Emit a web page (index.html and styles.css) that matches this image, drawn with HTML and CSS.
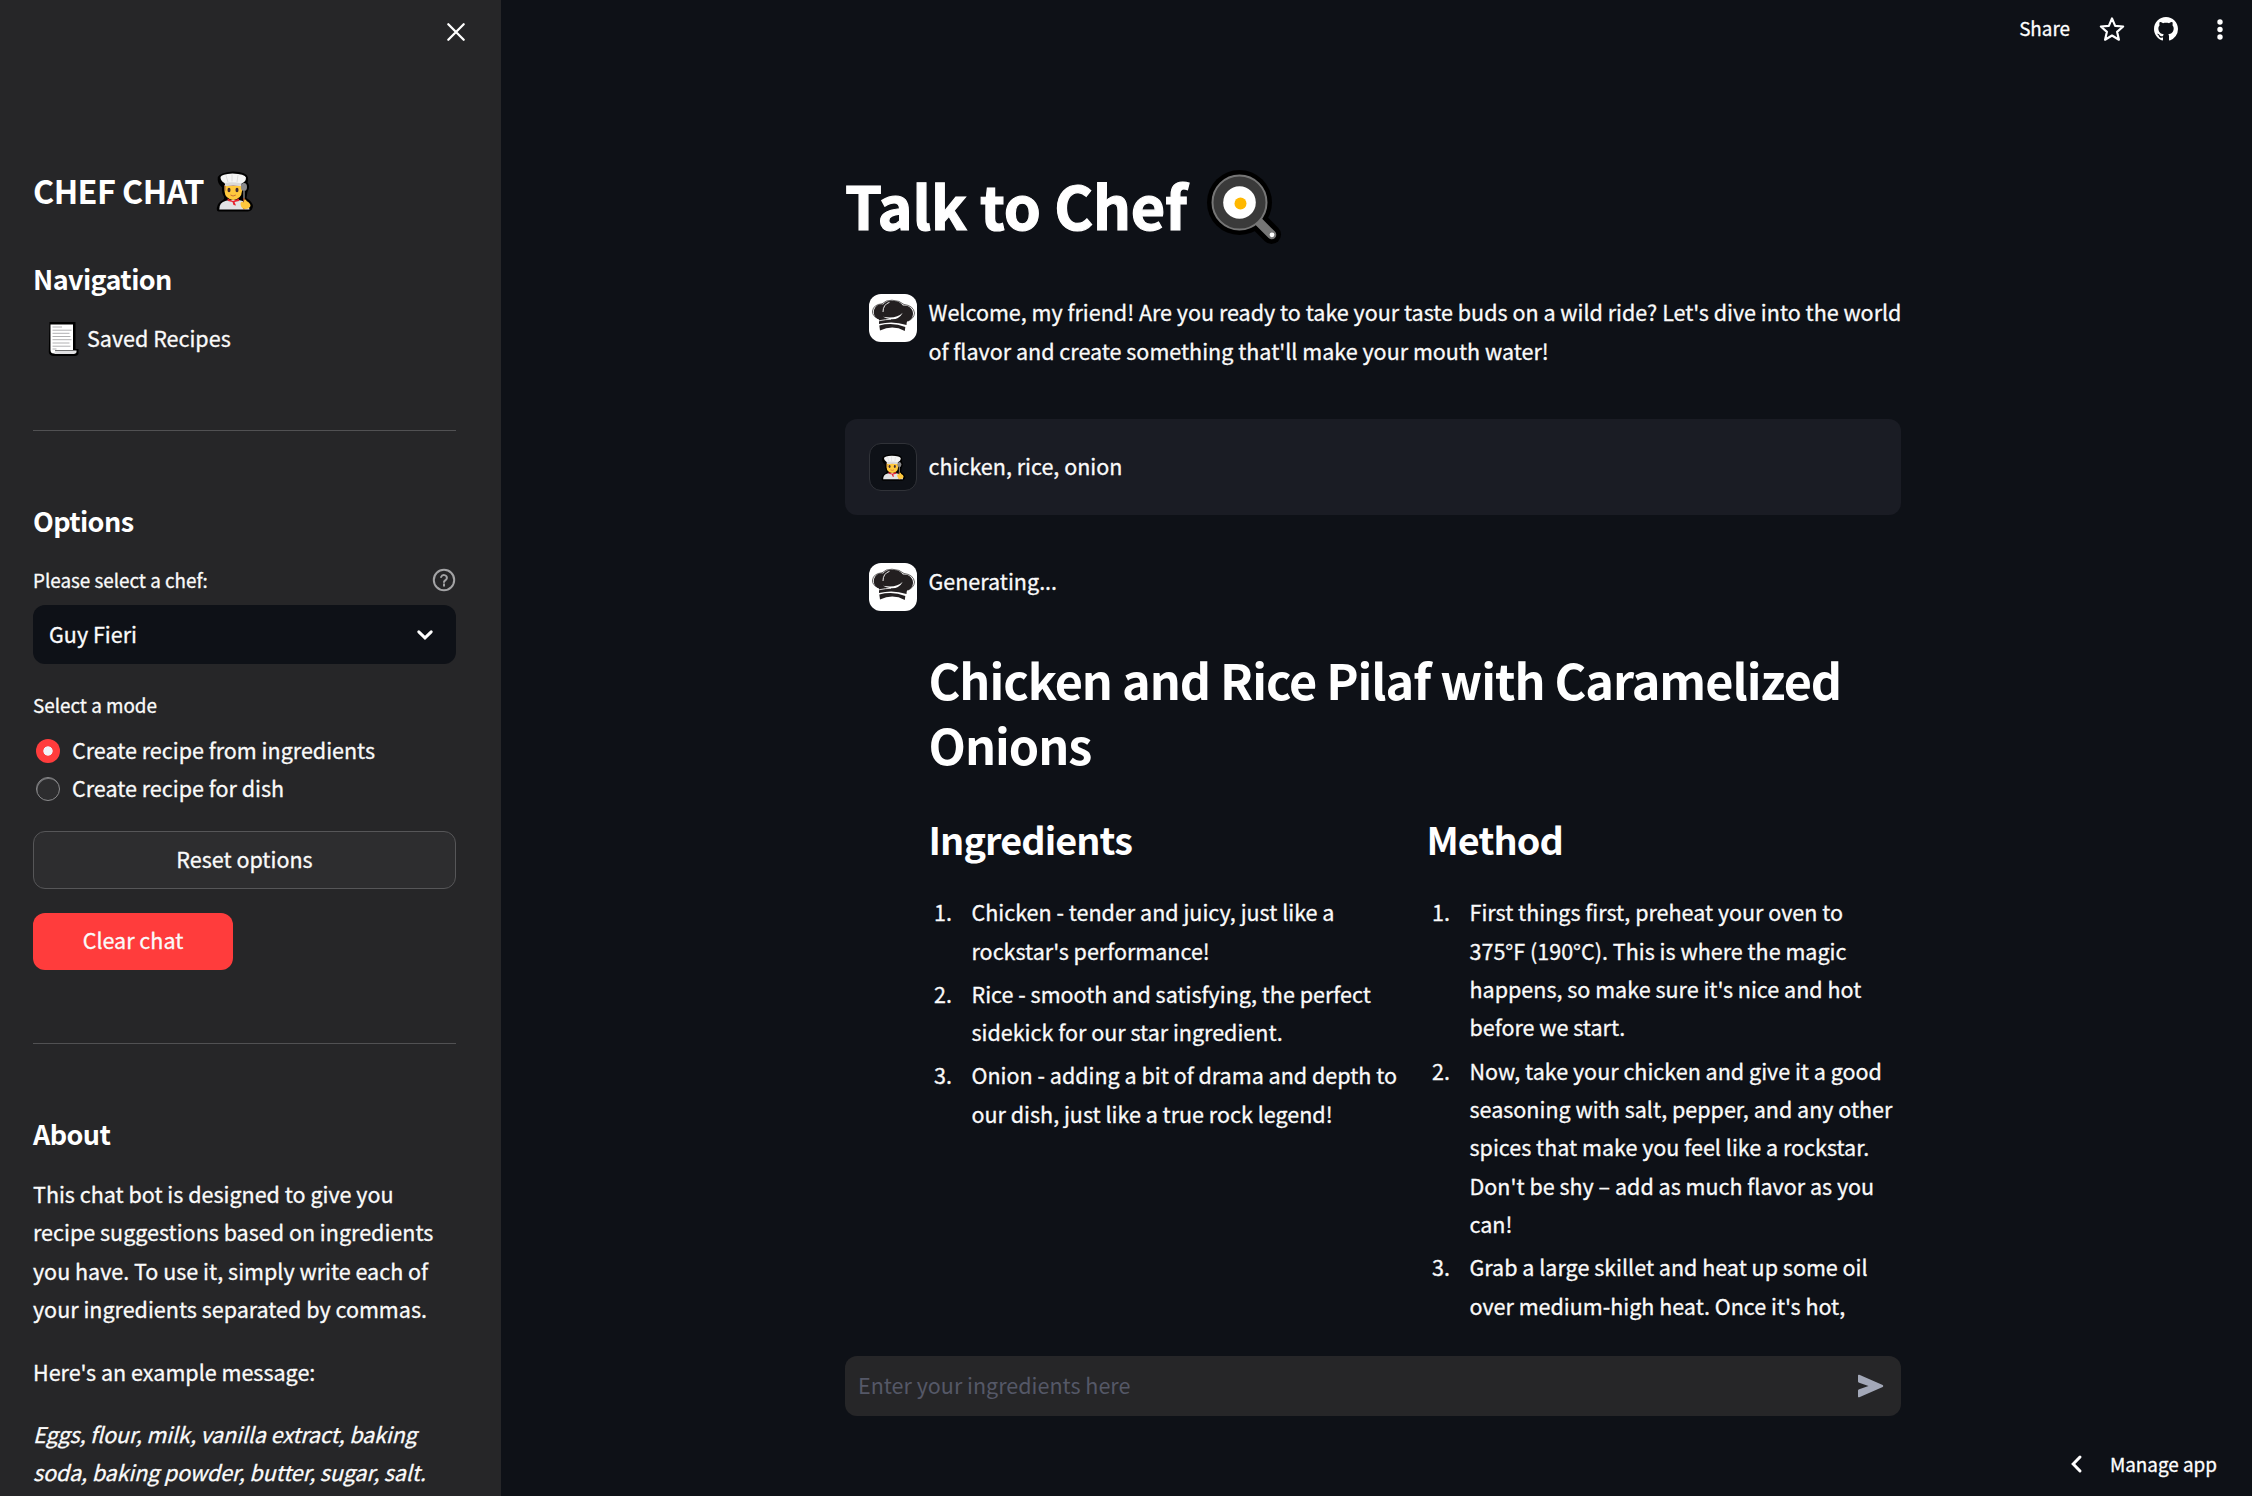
FILE: index.html
```html
<!DOCTYPE html>
<html lang="en">
<head>
<meta charset="utf-8">
<title>Talk to Chef</title>
<link rel="stylesheet" href="styles.css">
</head>
<body>
<svg class="defs" aria-hidden="true">
  <symbol id="chef" viewBox="0 0 38 41">
    <path d="M3 40.5Q.5 40.500 .8 37Q1.500 31.500 7 29Q8.500 28 8.200 26Q5.500 22 6 16.500Q.8 12 1.800 6Q4 1.500 17 .5Q31 .8 32 6.500Q32.500 9 31.500 11.500Q33.800 14 32.800 18Q31 21 31 24L30.500 27Q36.500 31 37 35Q36.500 40 32 40.500Z" fill="#000"/>
    <path d="M3.300 38.500Q3 31.500 10 29.700L17 28.500L25 29.500Q33 31.500 33.500 38.500Z" fill="#e2e2e4"/>
    <path d="M8.500 14H26V20Q25.500 28 17.200 29Q9 28 8.500 20Z" fill="#ffc83d"/>
    <path d="M8.500 14V19L9.500 20V15H25.500V19L26 18V14Z" fill="#a56953"/>
    <path d="M4.500 6Q5.500 3 16.500 2.500Q29 3 30 6.500Q30 11 25.500 12.500L25 15Q17 13.500 9.500 15L8.500 12Q4.500 10 4.500 6Z" fill="#f4f4f4"/>
    <path d="M9 12Q17 10.500 25.500 12.500L25 15Q17 13.500 9.500 15Z" fill="#dadada"/>
    <path d="M10 4.500L12 11M16 3.500V10.500M22 4L21 11" stroke="#d6d6d6" stroke-width=".8"/>
    <path d="M11.300 27.500L17 30L23 27.500V30L18.500 31L20 34.500L17.500 34L16.500 31L12 30Z" fill="#e8222f"/>
    <path d="M14.500 24Q17 26 19.800 24" stroke="#c9703a" fill="none"/>
    <ellipse cx="13" cy="19" rx="1.500" ry="2.200" fill="#402a32"/><ellipse cx="21" cy="19" rx="1.500" ry="2.200" fill="#402a32"/>
    <ellipse cx="28" cy="16" rx="3" ry="4" fill="#8a8a8c"/>
    <path d="M28 19V38.500" stroke="#777" stroke-width="1.600"/><path d="M28 27V38.500" stroke="#8b4a2f" stroke-width="2"/>
    <path d="M24.500 32Q26 30 27.500 31.500L28.500 28.500Q30.500 28 30.500 30Q34.500 32 34.500 35Q33 38.500 27.500 37.800Q24.500 36.500 24.500 32Z" fill="#ffc83d"/>
  </symbol>
  <symbol id="hat" viewBox="0 0 48 48">
    <path d="M10 25.500C5.500 24 4 19.500 5.200 15.500C6.500 11.500 10.500 9.800 14 10.500C17 7 21 6.500 24 7C28 6.500 32 8.500 34 11.500C39.500 11 44 14.500 44 19.500C44 24 41 26.800 38 27.500Q37.500 29 37.500 31Q24 26.500 10 30Z" fill="#231f20"/>
    <path d="M10.300 31.500Q24 28 36.300 33L35.800 37Q24 30.500 11 36.500Z" fill="#231f20"/>
    <path d="M14 18Q14 10.500 20.500 8.300" fill="none" stroke="#fff" stroke-width=".9"/>
    <path d="M14 22.800Q27 25.500 33.800 18.800Q30 25.800 22 25.300Q17 24.500 14 22.800Z" fill="#fff"/>
    <path d="M10 26.800Q17 25.300 22 25.300" fill="none" stroke="#fff" stroke-width=".8"/>
    <path d="M9 24.500Q3 22 3.500 17Q4.500 10.500 13 9.800Q17 6 23 6.200Q31 6.500 35 10.500Q44.500 11.500 45.500 19Q45 24.500 39 27" fill="none" stroke="#231f20" stroke-width=".7"/>
  </symbol>
</svg>
<div class="app">
  <aside class="sidebar">
    <div class="close-row"><svg class="close" viewBox="0 0 18 18"><path d="M1.300 1.300L16.700 16.700M16.700 1.300L1.300 16.700"/></svg></div>
    <h2 class="brand">CHEF CHAT <svg class="brand-icon"><use href="#chef"/></svg></h2>
    <h3 class="side-title nav-title">Navigation</h3>
    <a class="nav-link">
      <svg class="scroll" viewBox="0 0 31 34"><path d="M1.500 0H27.500V27H30.500V32Q29.500 34 27 34H5Q1 33 .8 30Z" fill="#000"/><path d="M2.500 2.500H25V28H7Q8 31.500 5 31.500Q2.500 31 2.500 28Z" fill="#fff"/><path d="M7 28.500H28.500Q29 31.500 26 32H5.500Q7.500 31 7 28.500Z" fill="#e1e1e3"/><path d="M4.500 5H14M4.500 8.200H23.500M4.500 11.300H21.500M4.500 14.500H22.500M4.500 17.700H23.500M4.500 21H21.500M4.500 24.200H22.500M4.500 27H8.500" stroke="#b0b0b2" stroke-width="1"/></svg>
      <span>Saved Recipes</span>
    </a>
    <hr class="rule">
    <h3 class="side-title section">Options</h3>
    <div class="label-row"><span>Please select a chef:</span>
      <svg class="help" viewBox="0 0 24 24"><circle cx="12" cy="12" r="10.200"/><path d="M9.100 9a3 3 0 0 1 5.800 1c0 2-2.900 2.600-2.900 4"/><path d="M12 16.200v1.600"/></svg>
    </div>
    <div class="select"><span>Guy Fieri</span><svg class="chevron" viewBox="0 0 16 10"><path d="M1.800 1.800L8 7.800L14.200 1.800"/></svg></div>
    <div class="label-row mode">Select a mode</div>
    <div class="radios">
      <label class="radio"><i class="dot on"></i>Create recipe from ingredients</label>
      <label class="radio"><i class="dot"></i>Create recipe for dish</label>
    </div>
    <button class="btn reset">Reset options</button>
    <button class="btn clear">Clear chat</button>
    <hr class="rule">
    <h3 class="side-title section">About</h3>
    <p class="about first">This chat bot is designed to give you<br>recipe suggestions based on ingredients<br>you have. To use it, simply write each of<br>your ingredients separated by commas.</p>
    <p class="about">Here's an example message:</p>
    <p class="about"><em>Eggs, flour, milk, vanilla extract, baking<br>soda, baking powder, butter, sugar, salt.</em></p>
  </aside>
  <main class="main">
    <header class="toolbar">
      <span class="share">Share</span>
      <svg class="star" viewBox="0 0 24 24"><path d="M12 2.200L14.900 9.100L22.300 9.700L16.700 14.600L18.400 21.900L12 18L5.600 21.900L7.300 14.600L1.700 9.700L9.100 9.100Z"/></svg>
      <svg class="github" viewBox="0 0 16 16"><path d="M8 0C3.580 0 0 3.580 0 8c0 3.540 2.290 6.530 5.470 7.590.4.070.55-.17.55-.38 0-.19-.01-.82-.01-1.490-2.010.37-2.530-.49-2.690-.94-.09-.23-.48-.94-.82-1.130-.28-.15-.68-.52-.01-.53.63-.01 1.080.58 1.230.82.72 1.210 1.870.87 2.330.66.07-.52.28-.87.51-1.070-1.780-.2-3.640-.89-3.640-3.950 0-.87.31-1.590.82-2.150-.08-.2-.36-1.020.08-2.120 0 0 .67-.21 2.200.82.64-.18 1.320-.27 2-.27s1.360.09 2 .27c1.530-1.040 2.200-.82 2.200-.82.44 1.100.16 1.920.08 2.120.51.56.82 1.270.82 2.150 0 3.070-1.870 3.750-3.650 3.950.29.25.54.73.54 1.480 0 1.070-.01 1.930-.01 2.200 0 .21.15.46.55.38A8.010 8.010 0 0 0 16 8c0-4.420-3.580-8-8-8z"/></svg>
      <svg class="more" viewBox="0 0 6 21"><circle cx="3" cy="3" r="2.700"/><circle cx="3" cy="10.500" r="2.700"/><circle cx="3" cy="18" r="2.700"/></svg>
    </header>
    <section class="chat">
      <h1 class="title">Talk to Chef
        <svg class="pan" viewBox="0 0 74 74"><path d="M32 32L64.500 64.500" stroke="#000" stroke-width="19" stroke-linecap="round"/><circle cx="32.500" cy="32.500" r="32.500" fill="#000"/><path d="M50 50L64.800 64.800" stroke="#767676" stroke-width="9" stroke-linecap="round"/><circle cx="32.500" cy="32.500" r="27" fill="#3a3a3a" stroke="#767676" stroke-width="2"/><circle cx="32.500" cy="32.500" r="16.300" fill="#fff"/><circle cx="33.500" cy="33.500" r="6" fill="#ffb800"/><circle cx="65" cy="64.800" r="2.400" fill="#fff"/></svg>
      </h1>
      <article class="message welcome">
        <span class="avatar bot"><svg><use href="#hat"/></svg></span>
        <div class="body"><p>Welcome, my friend! Are you ready to take your taste buds on a wild ride? Let's dive into the world<br>of flavor and create something that'll make your mouth water!</p></div>
      </article>
      <article class="message user">
        <span class="avatar me"><svg><use href="#chef"/></svg></span>
        <div class="body"><p>chicken, rice, onion</p></div>
      </article>
      <article class="message">
        <span class="avatar bot"><svg><use href="#hat"/></svg></span>
        <div class="body">
          <p>Generating...</p>
          <h2 class="recipe">Chicken and Rice Pilaf with Caramelized<br>Onions</h2>
          <div class="columns">
            <section>
              <h3 class="col-title">Ingredients</h3>
              <ol class="steps">
                <li><span>1.</span><p>Chicken - tender and juicy, just like a<br>rockstar's performance!</p></li>
                <li><span>2.</span><p>Rice - smooth and satisfying, the perfect<br>sidekick for our star ingredient.</p></li>
                <li><span>3.</span><p>Onion - adding a bit of drama and depth to<br>our dish, just like a true rock legend!</p></li>
              </ol>
            </section>
            <section>
              <h3 class="col-title">Method</h3>
              <ol class="steps">
                <li><span>1.</span><p>First things first, preheat your oven to<br>375°F (190°C). This is where the magic<br>happens, so make sure it's nice and hot<br>before we start.</p></li>
                <li><span>2.</span><p>Now, take your chicken and give it a good<br>seasoning with salt, pepper, and any other<br>spices that make you feel like a rockstar.<br>Don't be shy – add as much flavor as you<br>can!</p></li>
                <li><span>3.</span><p>Grab a large skillet and heat up some oil<br>over medium-high heat. Once it's hot,</p></li>
              </ol>
            </section>
          </div>
        </div>
      </article>
    </section>
    <footer class="footer">
      <div class="input"><span>Enter your ingredients here</span><svg class="send" viewBox="0 0 27 24"><path d="M1 1.600Q1 .3 2.300 .8L25.700 11Q27 12 25.700 13L2.300 23.200Q1 23.700 1 22.400V16.500Q1 15.500 2.200 15.200L11.500 12L2.200 8.800Q1 8.500 1 7.500Z"/></svg></div>
      <div class="manage"><svg viewBox="0 0 11 18"><path d="M9 2L2.200 9L9 16"/></svg><span>Manage app</span></div>
    </footer>
  </main>
</div>
</body>
</html>
```
FILE: styles.css
```css
* { box-sizing: border-box; margin: 0; padding: 0; }
body {
  width: 2252px; height: 1496px; overflow: hidden;
  background: #0e1117; color: #fafafa;
  font: 400 21.52px/38.4px "Noto Sans CJK SC", "Noto Sans", sans-serif;
  -webkit-text-stroke: .3px currentColor;
  white-space: nowrap;
}
svg { display: block; overflow: visible; }
.defs { width: 0; height: 0; position: absolute; }
.app { display: flex; height: 1496px; }

/* Sidebar */
.sidebar { width: 501px; height: 1496px; flex: none; overflow: hidden; padding: 0 45px 0 33px; background: #262628; }
.close-row { height: 168px; padding-top: 23px; display: flex; justify-content: flex-end; margin-right: -9px; }
.close { width: 18px; height: 18px; stroke: #fff; stroke-width: 2.300; stroke-linecap: round; fill: none; }
h1, h2, h3 { -webkit-text-stroke: 0; }
.brand { height: 43px; font-size: 32.4px; line-height: 43px; letter-spacing: -.018em; display: flex; gap: 11.500px; font-weight: 700; color: #fff; }
.brand-icon { width: 38px; height: 41px; margin-top: 3px; }
.side-title { font-size: 27px; line-height: 36px; height: 36px; letter-spacing: -.022em; font-weight: 700; color: #fff; }
.nav-title { margin-top: 50px; }
.nav-link { display: flex; height: 39px; margin-top: 22px; padding-left: 15px; gap: 8px; }
.scroll { width: 31px; height: 34px; margin-top: 3px; }
.rule { border: 0; height: 1px; background: #515153; margin-top: 72px; }
.section { margin-top: 72px; }
.label-row { display: flex; justify-content: space-between; align-items: center; height: 34px; margin-top: 24px; font-size: 18.83px; line-height: 34px; }
.help { width: 24px; height: 24px; fill: none; stroke: #a3a3a5; stroke-width: 2; stroke-linecap: round; }
.select { display: flex; justify-content: space-between; align-items: center; height: 59px; margin-top: 8px; padding: 0 23px 0 16px; border-radius: 12px; background: #0e1117; }
.chevron { width: 16px; height: 10px; fill: none; stroke: #fff; stroke-width: 3; stroke-linecap: round; }
.label-row.mode { margin-top: 24px; }
.radios { margin-top: 9px; }
.radio { display: flex; align-items: center; gap: 12px; height: 38px; line-height: 38px; padding-left: 3px; }
.dot { width: 24px; height: 24px; border-radius: 50%; background: #2d2d2f; border: 1px solid #8a8a8c; box-shadow: inset .5px 1px 0 #77777a; margin-top: 2px; }
.dot.on { border: 0; box-shadow: none; background: radial-gradient(circle, #f0f2f6 4.300px, #ff3c3c 5px); }
.btn { display: block; font: inherit; color: #fafafa; border-radius: 12px; text-align: center; padding-bottom: 2px; -webkit-text-stroke: inherit; }
.reset { width: 423px; height: 58px; margin-top: 24px; background: #2d2d2f; border: 1px solid #565658; }
.clear { width: 200px; height: 57px; margin-top: 24px; background: #ff3c3c; border: 0; }
.clear + .rule { margin-top: 73px; }
.about { margin-top: 24px; }
.about.first { margin-top: 23px; }
.about em { letter-spacing: -.12px; }

/* Main area */
.main { flex: 1; display: flex; flex-direction: column; height: 1496px; }
.toolbar { height: 58px; display: flex; align-items: center; justify-content: flex-end; padding-right: 29px; color: #fff; font-size: 18.86px; }
.share { padding-bottom: 1px; }
.star { width: 26px; height: 26px; margin-left: 29px; fill: none; stroke: #fff; stroke-width: 2; stroke-linejoin: round; }
.github { width: 24px; height: 24px; margin-left: 29px; fill: #fff; }
.more { width: 6px; height: 21px; margin-left: 39px; fill: #fff; }
.chat { width: 1060px; margin-left: 344px; height: 1298px; overflow: hidden; padding: 107px 4px 0 0; }
.title { display: flex; gap: 20px; height: 79px; font-size: 59.400px; line-height: 79px; letter-spacing: -.15px; font-weight: 700; color: #fff; margin-bottom: 26px; -webkit-text-stroke: 1.200px #fff; }
.pan { width: 74px; height: 74px; margin-top: 5px; }
.message { display: flex; gap: 11.500px; padding: 24px 0 24px 24px; margin-bottom: 24px; border-radius: 12px; }
.welcome { height: 125px; }
.avatar { width: 48px; height: 48px; border-radius: 12px; flex: none; display: flex; align-items: center; justify-content: center; }
.bot { background: #fff; }
.bot svg { width: 48px; height: 48px; }
.me { background: #0e1117; border: 1px solid #303238; }
.me svg { width: 25px; height: 27px; }
.body { margin-top: -1px; flex: 1; }
.welcome .body { margin-top: -.6px; }
.user { background: #1a1c24; height: 96px; }
.user .body { margin-top: 4px; }
.recipe { margin-top: 47px; font-size: 48.600px; line-height: 64.800px; letter-spacing: -.0212em; font-weight: 700; color: #fff; }
.columns { display: grid; grid-template-columns: 474px 474px; gap: 24px; margin-top: 37px; }
.col-title { font-size: 37.800px; line-height: 50.400px; letter-spacing: -.024em; font-weight: 700; color: #fff; }
.steps { list-style: none; margin-top: 28.800px; }
.steps li { display: flex; margin-bottom: 4.800px; }
.steps li span { width: 43px; padding-left: 5.500px; flex: none; }

/* Prompt bar */
.footer { flex: 1; }
.input { width: 1056px; height: 60px; margin-left: 344px; border-radius: 12px; background: #262628; color: #555867; display: flex; justify-content: space-between; align-items: center; padding: 0 17px 0 13px; -webkit-text-stroke: 0; }
.input span { padding-bottom: 2px; }
.send { width: 27px; height: 24px; fill: #a3a8b8; }
.manage { display: flex; align-items: center; justify-content: flex-end; gap: 28px; margin-top: 31px; height: 34px; padding-right: 35px; color: #fff; font-size: 18.860px; line-height: 34px; }
.manage svg { width: 11px; height: 18px; fill: none; stroke: #fff; stroke-width: 3; stroke-linecap: round; }
```
